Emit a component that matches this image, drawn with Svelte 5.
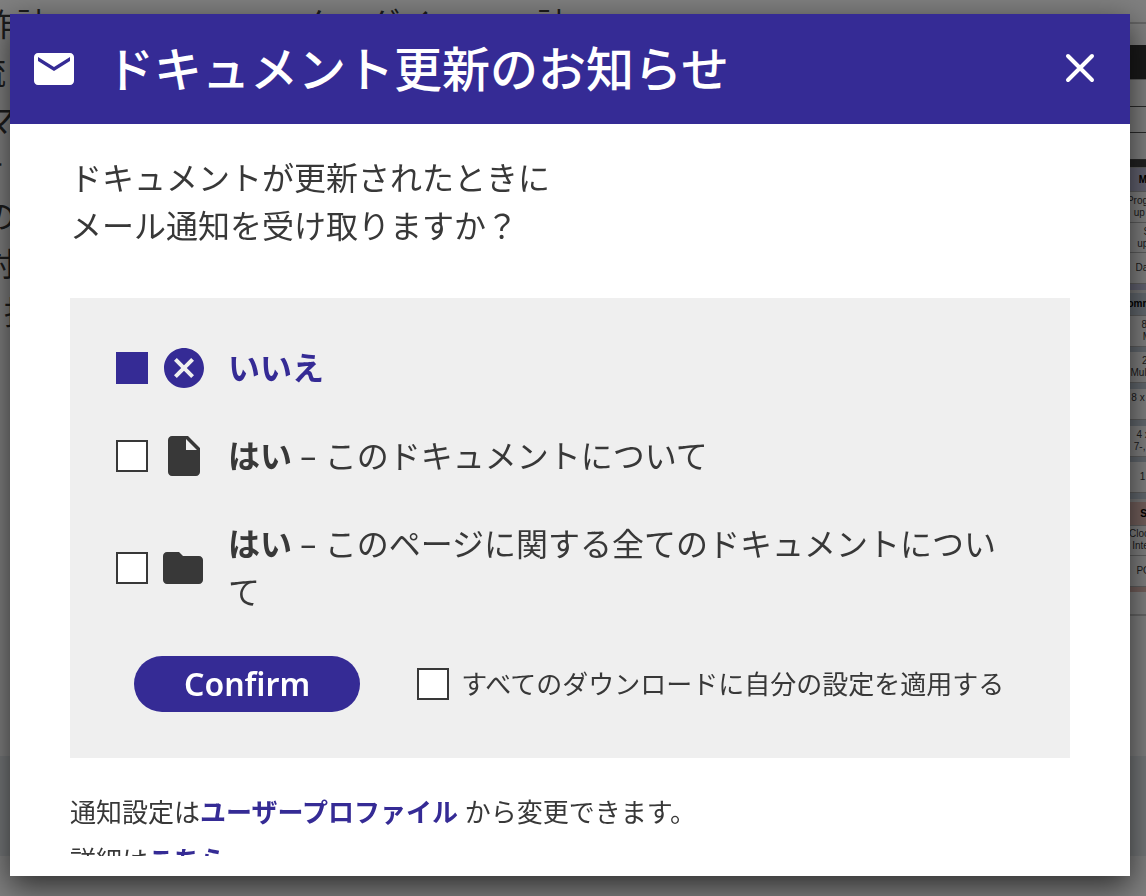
<script>
  let choice = $state("none");
  let applyAll = $state(false);
  let open = $state(true);

  const options = [
    { id: "none", icon: "cancel", strong: "いいえ", text: "" },
    { id: "document", icon: "file", strong: "はい", text: " – このドキュメントについて" },
    { id: "page", icon: "folder", strong: "はい", text: " – このページに関する全てのドキュメントについて" }
  ];

  const icons = {
    cancel:
      "M12 2C6.47 2 2 6.47 2 12s4.47 10 10 10 10-4.47 10-10S17.53 2 12 2zm5 13.59L15.59 17 12 13.41 8.41 17 7 15.59 10.59 12 7 8.41 8.41 7 12 10.59 15.59 7 17 8.41 13.41 12 17 15.59z",
    file:
      "M14 2H6c-1.1 0-2 .9-2 2v16c0 1.1.9 2 2 2h12c1.1 0 2-.9 2-2V8l-6-6zm-1 7V3.5L18.5 9H13z",
    folder:
      "M9.5 4h-6c-1.1 0-2 .9-2 2v12c0 1.1.9 2 2 2h16c1.1 0 2-.9 2-2V8c0-1.100-.9-2-2-2h-8l-2-2z"
  };

  const rows = [
    { kind: "space", lines: [] },
    { kind: "black", lines: [] },
    { kind: "plain", lines: [] },
    { kind: "plain", lines: [] },
    { kind: "plain", lines: [] },
    { kind: "dark", lines: [] },
    { kind: "head lilac", lines: ["Memory"] },
    { kind: "cell", lines: ["Program flash", "up to 2 MB"] },
    { kind: "cell", lines: ["SRAM", "up to 1 M"] },
    { kind: "cell", lines: ["Data flash"] },
    { kind: "bar lilac", lines: [] },
    { kind: "head blue", lines: ["Communication"] },
    { kind: "cell", lines: ["8 x SCI", "Master"] },
    { kind: "rule blue", lines: [] },
    { kind: "cell", lines: ["2 x SPI", "Multi-master"] },
    { kind: "rule blue", lines: [] },
    { kind: "cell", lines: ["8 x CAN FD", "7-bit"] },
    { kind: "rule blue", lines: [] },
    { kind: "cell", lines: ["4 x UART", "7-, 8-, 9-bit"] },
    { kind: "rule blue", lines: [] },
    { kind: "cell", lines: ["1 x USB"] },
    { kind: "bar blue", lines: [] },
    { kind: "head red", lines: ["System"] },
    { kind: "cell", lines: ["Clock control", "Internal osc"] },
    { kind: "cell", lines: ["POR/LVD"] },
    { kind: "rule red", lines: [] },
    { kind: "plain", lines: [] }
  ];
</script>

<div class="page">
  <div class="article">
    <ul class="notes">
      <li class="nested">作計ーーーーーーーークーダイーーー 計</li>
      <li>流</li>
      <li class="nested">マ</li>
      <li>き</li>
      <li class="nested">の</li>
      <li class="nested">対</li>
      <li class="deep">指</li>
    </ul>
    <table class="specs">
      <tbody>
        {#each rows as row}
          <tr class={row.kind}>
            <td>
              {#each row.lines as line}
                <div>{line}</div>
              {/each}
            </td>
          </tr>
        {/each}
      </tbody>
    </table>
  </div>
  <div class="band"></div>
</div>

{#if open}
  <div class="overlay">
    <div class="modal" role="dialog" aria-modal="true" aria-labelledby="modal-title">
      <header>
        <svg class="icon" viewBox="0 0 24 24" aria-hidden="true">
          <path
            d="M20 4H4c-1.1 0-2 .9-2 2v12c0 1.1.9 2 2 2h16c1.1 0 2-.9 2-2V6c0-1.100-.9-2-2-2zm0 4l-8 5-8-5V6l8 5 8-5v2z"
          />
        </svg>
        <h1 id="modal-title">ドキュメント更新のお知らせ</h1>
        <button class="close" type="button" aria-label="閉じる" onclick={() => (open = false)}>
          <svg viewBox="0 0 32 32" aria-hidden="true">
            <path d="M4 3l24 24M28 3l-24 24" />
          </svg>
        </button>
      </header>

      <div class="content">
        <p class="question">ドキュメントが更新されたときに<br />メール通知を受け取りますか？</p>

        <form class="panel" onsubmit={(e) => e.preventDefault()}>
          {#each options as option (option.id)}
            <label class="option" class:selected={choice === option.id}>
              <input type="radio" name="notify" value={option.id} bind:group={choice} />
              <svg class="icon" viewBox="0 0 24 24" aria-hidden="true">
                <path d={icons[option.icon]} />
              </svg>
              <span><strong>{option.strong}</strong>{option.text}</span>
            </label>
          {/each}

          <div class="actions">
            <button class="confirm" type="submit">Confirm</button>
            <label class="apply">
              <input type="checkbox" bind:checked={applyAll} />
              <span>すべてのダウンロードに自分の設定を適用する</span>
            </label>
          </div>
        </form>

        <p class="footnote">
          通知設定は<a href="#profile">ユーザープロファイル</a> から変更できます。<br />
          詳細は<a href="#details">こちら</a>
        </p>
      </div>
    </div>
  </div>
{/if}

<style>
  :global(body) {
    margin: 0;
    overflow: hidden;
    background: #fff;
  }

  .page,
  .overlay {
    font-family: "Open Sans", "Noto Sans CJK JP", sans-serif;
    color: #383838;
  }

  .page {
    height: 100vh;
    overflow: hidden;
  }

  .article {
    display: grid;
    grid-template-columns: 1fr 16px;
    height: 756px;
  }

  .notes {
    list-style: none;
    margin: 0 0 0 -26px;
    padding: 0;
    font-size: 32px;
    line-height: 48px;
    white-space: nowrap;
    overflow: hidden;
  }

  .nested {
    padding-left: 10px;
  }

  .deep {
    padding-left: 30px;
  }

  .specs {
    width: 56px;
    height: 594px;
    margin-top: 22px;
    border-collapse: collapse;
    table-layout: fixed;
    align-self: start;
    font: 10px/12px "Liberation Sans", sans-serif;
    text-align: center;
    white-space: nowrap;
  }

  .specs td {
    height: 30px;
    padding: 0;
    box-sizing: border-box;
    border-bottom: 1px solid #bbb;
  }

  .specs td div {
    display: flex;
    justify-content: center;
  }

  .specs .space td {
    height: 22px;
    border-top: 2px solid #ccc;
    border-bottom: 0;
  }

  .specs .black td {
    height: 34px;
    background: #333;
  }

  .specs .plain td {
    height: 26px;
    border-bottom-color: #555;
  }

  .specs .plain:last-child td {
    height: 22px;
    border-bottom: 2px solid #ccc;
  }

  .specs .dark td {
    height: 8px;
    background: #444;
  }

  .specs .head td {
    height: 24px;
    font-weight: 700;
    color: #000;
  }

  .specs .bar td {
    height: 8px;
    border-bottom: 3px solid #eee;
  }

  .specs .rule td {
    height: 6px;
    border: 0;
  }

  .lilac td {
    background: #c4c4e0;
  }

  .blue td {
    background: #c5d0dc;
  }

  .red td {
    background: #e6bfb8;
  }

  .band {
    height: 100px;
    background: #e9eef1;
  }

  .overlay {
    position: fixed;
    inset: 0;
    display: flex;
    box-sizing: border-box;
    padding: 14px 16px 20px 10px;
    background: rgba(0, 0, 0, 0.5);
  }

  .modal {
    flex: 1;
    display: flex;
    flex-direction: column;
    min-width: 0;
    box-sizing: border-box;
    padding-bottom: 20px;
    background: #fff;
    box-shadow: 0 10px 30px rgba(0, 0, 0, 0.65);
  }

  header {
    display: flex;
    align-items: center;
    flex: none;
    height: 110px;
    padding: 0 34px 0 20px;
    background: #352b95;
    color: #fff;
  }

  h1 {
    flex: 1;
    margin: 0 0 0 28px;
    font-size: 48px;
    line-height: 56px;
    font-weight: 500;
  }

  .icon {
    flex: none;
    width: 48px;
    height: 48px;
    fill: currentColor;
  }

  .close {
    display: flex;
    padding: 0;
    border: 0;
    background: none;
    color: inherit;
    cursor: pointer;
  }

  .close svg {
    width: 32px;
    height: 32px;
    fill: none;
    stroke: currentColor;
    stroke-width: 4;
    stroke-linecap: round;
  }

  .content {
    flex: 1;
    min-height: 0;
    box-sizing: border-box;
    padding: 30px 60px 0;
    overflow: auto;
    scrollbar-width: none;
  }

  .question {
    margin: 0 0 48px;
    font-size: 32px;
    line-height: 48px;
  }

  .panel {
    display: flex;
    flex-direction: column;
    gap: 40px;
    padding: 46px;
    background: #efefef;
  }

  .option {
    display: flex;
    align-items: center;
    font-size: 32px;
    line-height: 48px;
    cursor: pointer;
  }

  .option .icon {
    margin: 0 20px 0 12px;
  }

  .option.selected {
    color: #352b95;
  }

  input {
    flex: none;
    appearance: none;
    box-sizing: border-box;
    width: 32px;
    height: 32px;
    margin: 0;
    border: 2px solid #383838;
    border-radius: 0;
    background: #fff;
  }

  input:checked {
    border-color: #352b95;
    background: #352b95;
  }

  .actions {
    display: flex;
    align-items: center;
    gap: 57px;
    padding-left: 18px;
  }

  .confirm {
    height: 56px;
    padding: 0 50px;
    border: 0;
    border-radius: 28px;
    background: #352b95;
    color: #fff;
    font-family: "Noto Sans", sans-serif;
    font-size: 32px;
    font-weight: 600;
    line-height: 56px;
    cursor: pointer;
  }

  .apply {
    display: flex;
    align-items: center;
    gap: 12px;
    font-size: 26px;
    line-height: 48px;
    white-space: nowrap;
  }

  .footnote {
    margin: 30px 0 0;
    font-size: 26px;
    line-height: 48px;
  }

  a {
    color: #352b95;
    font-weight: 600;
    text-decoration: none;
  }
</style>
